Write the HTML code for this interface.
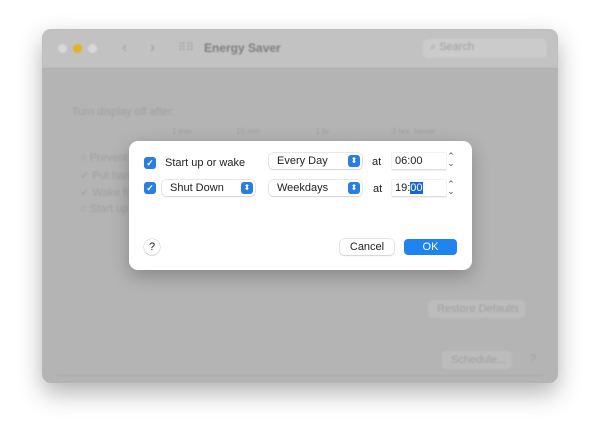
<!DOCTYPE html>
<html><head><style>
*{margin:0;padding:0;box-sizing:border-box}
body{width:600px;height:440px;background:#fff;font-family:"Liberation Sans",sans-serif;position:relative;overflow:hidden}
.win{position:absolute;left:42px;top:29px;width:516px;height:354px;background:#b4b4b4;border-radius:9px;box-shadow:0 10px 24px rgba(0,0,0,.3);overflow:hidden}
.blur{position:absolute;left:0;top:0;width:100%;height:100%;filter:blur(0.7px)}
.tb{position:absolute;left:0;top:0;width:100%;height:40px;background:#c2c2c2;border-bottom:1px solid #aaa}
.a{position:absolute;color:#a0a0a0;font-size:11px;white-space:nowrap}
.dot{position:absolute;width:9px;height:9px;border-radius:50%;top:15px;background:#d8d8d8}
.sheet{position:absolute;left:129px;top:141px;width:343px;height:129px;background:#fff;border-radius:9px;box-shadow:0 6px 18px rgba(0,0,0,.25);font-size:11px;color:#222}
.cb{position:absolute;width:12px;height:12px;border-radius:3px;background:#2a7de1;color:#fff;font-size:9px;line-height:12px;text-align:center;font-weight:bold}
.pop{position:absolute;height:16px;border-radius:4px;background:#fff;box-shadow:0 0 0 .5px #ccc,0 1px 1px rgba(0,0,0,.15);padding-left:8px;line-height:16px;font-size:11px}
.pop i{position:absolute;right:2px;top:2px;width:12px;height:12px;border-radius:3px;background:#2a7de1;color:#fff;font-style:normal;font-size:8px;line-height:12px;text-align:center}
.t{position:absolute}
.fld{position:absolute;width:54px;height:17px;border-bottom:1px solid #ddd;box-shadow:0 0 0 .5px #e4e4e4;padding-left:3px;line-height:17px;font-size:11px}
.st{position:absolute;font-size:9px;line-height:7px;color:#555;text-align:center;width:8px}
.btn{position:absolute;height:16px;border-radius:4px;line-height:16px;text-align:center;font-size:11px}
</style></head><body>
<div class="win"><div class="blur">
<div class="tb">
<div class="dot" style="left:16px"></div><div class="dot" style="left:31px;background:#e8b020"></div><div class="dot" style="left:46px"></div>
<div class="a" style="left:80px;top:10px;font-size:15px">‹</div>
<div class="a" style="left:108px;top:10px;font-size:15px">›</div>
<div class="a" style="left:136px;top:12px;font-size:11px">⠿⠿</div>
<div class="a" style="left:162px;top:12px;font-size:12px;font-weight:bold;color:#7e7e7e">Energy Saver</div>
<div style="position:absolute;left:381px;top:10px;width:124px;height:19px;background:#cbcbcb;border-radius:5px"></div>
<div class="a" style="left:388px;top:12px">⌕ Search</div>
</div>
<div class="a" style="left:30px;top:77px">Turn display off after:</div>
<div class="a" style="left:130px;top:98px;font-size:8px">1 min &nbsp;&nbsp;&nbsp;&nbsp;&nbsp;&nbsp;&nbsp;&nbsp;&nbsp;&nbsp;&nbsp;&nbsp;&nbsp;&nbsp;&nbsp;&nbsp;&nbsp;&nbsp;&nbsp;15 min &nbsp;&nbsp;&nbsp;&nbsp;&nbsp;&nbsp;&nbsp;&nbsp;&nbsp;&nbsp;&nbsp;&nbsp;&nbsp;&nbsp;&nbsp;&nbsp;&nbsp;&nbsp;&nbsp;&nbsp;&nbsp;&nbsp;&nbsp;&nbsp;1 hr &nbsp;&nbsp;&nbsp;&nbsp;&nbsp;&nbsp;&nbsp;&nbsp;&nbsp;&nbsp;&nbsp;&nbsp;&nbsp;&nbsp;&nbsp;&nbsp;&nbsp;&nbsp;&nbsp;&nbsp;&nbsp;&nbsp;&nbsp;&nbsp;&nbsp;&nbsp;&nbsp;3 hrs &nbsp;Never</div>
<div class="a" style="left:38px;top:123px">○ Prevent</div>
<div class="a" style="left:38px;top:140px">✓ Put hard</div>
<div class="a" style="left:38px;top:157px">✓ Wake fo</div>
<div class="a" style="left:38px;top:174px">○ Start up</div>
<div style="position:absolute;left:386px;top:271px;width:97px;height:18px;border-radius:4px;background:#bcbcbc"></div>
<div class="a" style="left:395px;top:274px">Restore Defaults</div>
<div style="position:absolute;left:400px;top:322px;width:70px;height:18px;border-radius:4px;background:#bcbcbc"></div>
<div class="a" style="left:409px;top:325px">Schedule...</div>
<div class="a" style="left:488px;top:324px">?</div>
<div style="position:absolute;left:15px;right:15px;top:346px;height:1px;background:#a8a8a8"></div>
</div></div>
<div class="sheet">
<div class="cb" style="left:15px;top:16px">✓</div>
<div class="t" style="left:36px;top:16px">Start up or wake</div>
<div class="pop" style="left:140px;top:12px;width:93px">Every Day<i>⬍</i></div>
<div class="t" style="left:243px;top:15px">at</div>
<div class="fld" style="left:263px;top:12px">06:00</div>
<div class="st" style="left:318px;top:12px">⌃<br>⌄</div>
<div class="cb" style="left:15px;top:41px">✓</div>
<div class="pop" style="left:33px;top:39px;width:93px">Shut Down<i>⬍</i></div>
<div class="pop" style="left:140px;top:39px;width:93px">Weekdays<i>⬍</i></div>
<div class="t" style="left:244px;top:42px">at</div>
<div class="fld" style="left:263px;top:39px">19:<span style="background:#1d64d6;color:#fff">00</span></div>
<div class="st" style="left:318px;top:40px">⌃<br>⌄</div>
<div class="btn" style="left:15px;top:98px;width:16px;border-radius:50%;box-shadow:0 0 0 .5px #ccc,0 1px 1px rgba(0,0,0,.15)">?</div>
<div class="btn" style="left:211px;top:98px;width:54px;box-shadow:0 0 0 .5px #ccc,0 1px 1px rgba(0,0,0,.15)">Cancel</div>
<div class="btn" style="left:275px;top:98px;width:53px;background:#1f84f0;color:#fff">OK</div>
</div>
</body></html>
